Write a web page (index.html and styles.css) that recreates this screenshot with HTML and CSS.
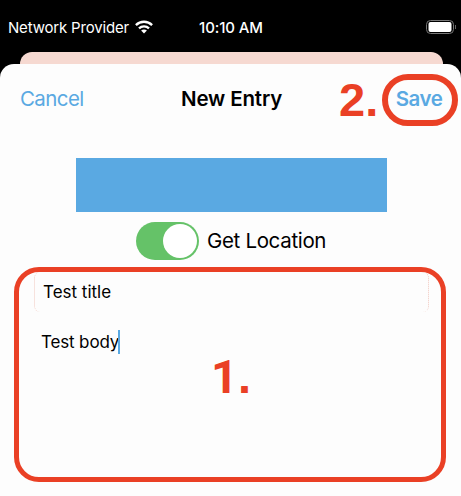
FILE: index.html
```html
<!DOCTYPE html>
<html lang="en">
<head>
<meta charset="utf-8">
<title>New Entry</title>
<link rel="stylesheet" href="styles.css">
</head>
<body>
<header class="status">
  <div class="carrier"><span>Network Provider</span>
    <svg class="wifi" viewBox="0 0 18 14" width="18" height="14"><g fill="none" stroke="#fff" stroke-width="2.3"><path d="M.9 5.1C5.4.6 12.6.6 17.1 5.1"/><path d="M4 8.4c2.8-2.7 7.2-2.7 10 0"/></g><path d="M6.1 10.6c1.6-1.5 4.2-1.5 5.8 0L9 13.5z" fill="#fff"/></svg>
  </div>
  <span class="time">10:10 AM</span>
  <svg class="battery" viewBox="0 0 31 15" width="31" height="15"><rect x=".5" y=".5" width="27" height="13" rx="4" fill="none" stroke="#777"/><rect x="2.5" y="2" width="23" height="10" rx="2" fill="#fff"/><path d="M29.5 5v4" stroke="#666"/></svg>
</header>
<div class="back-sheet"></div>
<main class="sheet">
  <nav class="nav">
    <a class="cancel">Cancel</a>
    <h1>New Entry</h1>
    <a class="save">Save</a>
    <span class="mark mark-two">2.</span>
  </nav>
  <div class="banner"></div>
  <div class="location"><span class="switch"><i></i></span><span class="label">Get Location</span></div>
  <section class="form">
    <div class="title-field"><span>Test title</span></div>
    <div class="body-field"><span>Test body</span><i class="caret"></i></div>
    <span class="mark mark-one"><span class="digit">1</span>.</span>
  </section>
</main>
</body>
</html>
```
FILE: styles.css
```css
* { box-sizing: border-box; }
body {
  margin: 0;
  height: 496px;
  overflow: hidden;
  background: #000;
  color: #000;
  font-family: Inter, "Liberation Sans", sans-serif;
  white-space: nowrap;
}
.status {
  display: grid;
  grid-template-columns: 199px 227px 31px;
  align-items: start;
  height: 52px;
  padding-top: 18px;
  color: #fff;
  font-size: 15px;
  line-height: 20px;
}
.carrier { display: flex; gap: 6px; padding-left: 8px; letter-spacing: -.18px; }
.wifi { margin-top: 2px; }
.time { font-weight: 500; letter-spacing: -.1px; }
.battery { margin-top: 2px; }
.back-sheet {
  height: 24px;
  margin: 0 18px 0 20px;
  border-radius: 12px 12px 0 0;
  background: #f6d9d1;
}
.sheet {
  position: relative;
  height: 432px;
  margin-top: -12px;
  border-radius: 14px 14px 0 0;
  background: #fdfdfd;
}
.nav {
  position: relative;
  display: grid;
  grid-template-columns: 161px 221px 76px;
  height: 94px;
  padding-top: 10px;
  font-size: 20.5px;
}
.nav a { color: #5aa9e2; }
.cancel { padding: 10px 0 0 20px; line-height: 30px; letter-spacing: -.6px; }
.nav h1 { margin: 0; padding: 10px 0 0 20px; font-size: 20.5px; font-weight: 600; line-height: 30px; letter-spacing: -.15px; }
.save {
  height: 52px;
  border: 6px solid #ea4025;
  border-radius: 26px;
  font-weight: 600;
  line-height: 38px;
  letter-spacing: -.5px;
  text-indent: -2px;
  text-align: center;
}
.mark {
  position: absolute;
  color: #ea4025;
  font-family: "Liberation Sans", sans-serif;
  font-size: 47px;
  font-weight: 700;
  line-height: 48px;
}
.mark-two { left: 339px; top: 12px; }
.banner { width: 311px; height: 54px; margin-left: 76px; background: #5aa9e2; }
.location { display: flex; gap: 8px; height: 55px; padding: 10px 0 0 136px; }
.switch { width: 63px; height: 38px; padding: 2px; border-radius: 19px; background: #65c268; }
.switch i { display: block; width: 34px; height: 34px; margin-left: 25px; border-radius: 50%; background: #fff; }
.label { font-size: 20.5px; line-height: 38px; letter-spacing: -.33px; }
.form {
  position: relative;
  width: 432px;
  height: 215px;
  margin-left: 14px;
  border: 5px solid #ea4025;
  border-radius: 25px;
  font-size: 17px;
}
.title-field {
  height: 40px;
  margin: 0 12px 0 15px;
  padding-left: 8px;
  border: 1px dotted #f1c8be;
  border-width: 0 1px;
  border-radius: 6px;
  line-height: 40px;
}
.body-field { display: flex; align-items: center; height: 24px; margin: 18px 0 0 22px; letter-spacing: -.15px; }
.caret { width: 2px; height: 24px; margin-left: -1px; background: #5aa9e2; }
.mark-one { left: 192px; top: 81px; }
.digit { font-family: Roboto, "Liberation Sans", sans-serif; }
```
